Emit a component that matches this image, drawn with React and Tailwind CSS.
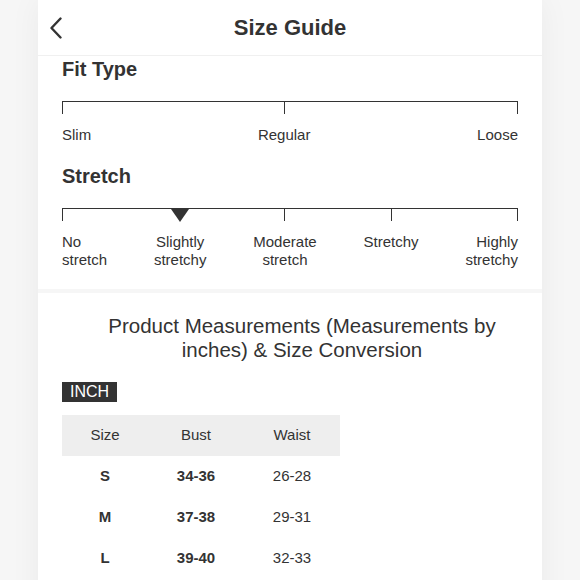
import React from 'react';

const stretchLabels = [
  ['No', 'stretch'],
  ['Slightly', 'stretchy'],
  ['Moderate', 'stretch'],
  ['Stretchy'],
  ['Highly', 'stretchy'],
];

const rows = [
  { size: 'S', bust: '34-36', waist: '26-28' },
  { size: 'M', bust: '37-38', waist: '29-31' },
  { size: 'L', bust: '39-40', waist: '32-33' },
];

function Marker({ kind }) {
  if (kind === 'triangle') {
    return (
      <svg width="18" height="13" viewBox="0 0 18 13" className="block">
        <polygon points="0,0 18,0 9,13" fill="#333" />
      </svg>
    );
  }
  return <div className="w-px h-[12px] bg-[#333]" />;
}

function Scale({ labels, selected }) {
  return (
    <div className="border-t border-[#333]">
      <div className="flex justify-between">
        {labels.map((lines, i) => {
          const first = i === 0;
          const last = i === labels.length - 1;
          const align = first ? 'items-start text-left' : last ? 'items-end text-right' : 'items-center text-center';
          return (
            <div key={i} className={`flex flex-col ${align}`}>
              <div className="h-[12px] flex justify-center">
                <Marker kind={i === selected ? 'triangle' : 'tick'} />
              </div>
              <div className="mt-[12px] text-[15px] leading-[18px] text-[#333]">
                {lines.map((l, j) => (
                  <div key={j}>{l}</div>
                ))}
              </div>
            </div>
          );
        })}
      </div>
    </div>
  );
}

export default function App() {
  return (
    <div className="min-h-screen bg-[#f6f6f6] text-[#333]" style={{ fontFamily: '"Liberation Sans", Arial, sans-serif' }}>
      <div className="w-[504px] mx-auto flex flex-col gap-[4px] shadow-[0_0_30px_rgba(0,0,0,0.05)]">
        <div className="bg-white">
          <div className="h-[56px] relative flex items-center justify-center border-b border-[#f0f0f0]">
            <svg width="14" height="22" viewBox="0 0 14 22" className="absolute left-[11px] top-[17px]">
              <polyline points="11.5,1.5 2.5,11 11.5,20.5" fill="none" stroke="#333" strokeWidth="2.4" strokeLinecap="round" strokeLinejoin="round" />
            </svg>
            <h1 className="text-[22px] font-bold">Size Guide</h1>
          </div>
          <div className="px-[24px] pt-[1px] pb-[20px]">
            <h2 className="text-[20px] leading-[24px] font-bold">Fit Type</h2>
            <div className="mt-[20px]">
              <Scale labels={[['Slim'], ['Regular'], ['Loose']]} selected={-1} />
            </div>
            <h2 className="mt-[20px] text-[20px] leading-[24px] font-bold">Stretch</h2>
            <div className="mt-[20px]">
              <Scale labels={stretchLabels} selected={1} />
            </div>
          </div>
        </div>

        <div className="bg-white px-[24px] pt-[21px] pb-[40px]">
          <h3 className="text-[20.5px] leading-[24px] text-center pl-[36px] pr-[12px]">
            Product Measurements (Measurements by inches) &amp; Size Conversion
          </h3>
          <div className="mt-[20px] flex">
            <span className="bg-[#333] text-white text-[16px] leading-[20px] px-[8px]">INCH</span>
          </div>
          <table className="mt-[13px] w-[278px] text-[15px] text-center border-collapse">
            <thead>
              <tr className="bg-[#eeeeee] h-[41px]">
                <th className="font-normal w-[86px]">Size</th>
                <th className="font-normal w-[96px]">Bust</th>
                <th className="font-normal w-[96px]">Waist</th>
              </tr>
            </thead>
            <tbody>
              {rows.map(r => (
                <tr key={r.size} className="h-[41px]">
                  <td className="font-bold">{r.size}</td>
                  <td className="font-bold">{r.bust}</td>
                  <td>{r.waist}</td>
                </tr>
              ))}
            </tbody>
          </table>
        </div>
      </div>
    </div>
  );
}
